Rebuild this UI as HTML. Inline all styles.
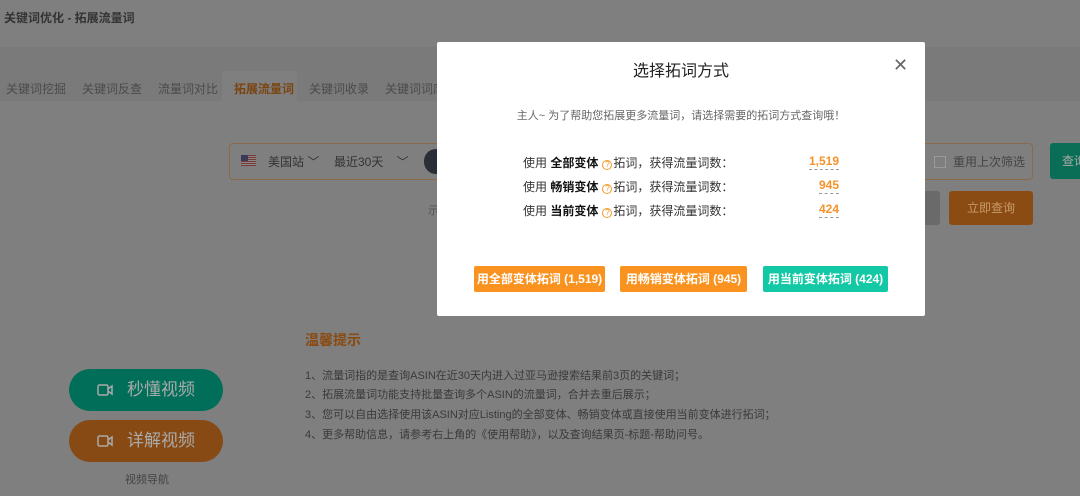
<!DOCTYPE html>
<html><head><meta charset="utf-8"><style>
*{margin:0;padding:0;box-sizing:border-box}
body{width:1080px;height:496px;overflow:hidden;background:#7f7f7f;font-family:"Liberation Sans","Noto Sans CJK SC",sans-serif;position:relative;color:#222}
.a{position:absolute;white-space:nowrap}
.tabs{position:absolute;left:0;top:47px;width:1080px;height:54px;background:#7a7a7a}
.tab{position:absolute;top:80px;font-size:12px;color:#4a4a4a}
.modal{position:absolute;left:437px;top:42px;width:488px;height:274px;background:#fff;border-radius:2px}
.row{position:absolute;left:86px;font-size:12px;color:#333}
.row b{color:#111}
.q{display:inline-block;width:10px;height:10px;border:1px solid #f39a2b;border-radius:50%;font-size:8px;line-height:8px;text-align:center;color:#f39a2b;vertical-align:0;margin:0 1px 0 4px}
.num{position:absolute;right:86px;font-size:12px;font-weight:bold;color:#f7922a;border-bottom:1px dashed #999;line-height:15px}
.btn{position:absolute;top:224px;height:26px;border-radius:2px;color:#fff;font-size:12px;line-height:26px;text-align:center;font-weight:bold}
.li{position:absolute;left:305px;font-size:11px;color:#3a3a3a}
</style></head><body>
<div class="a" style="left:4px;top:9px;font-size:12px;font-weight:bold;color:#333">关键词优化 - 拓展流量词</div>
<div class="tabs"></div>
<div class="a" style="left:222px;top:71px;width:75px;height:30px;background:#7f7f7f"></div>
<div class="tab" style="left:6px">关键词挖掘</div>
<div class="tab" style="left:82px">关键词反查</div>
<div class="tab" style="left:158px">流量词对比</div>
<div class="tab" style="left:234px;color:#7a4410;font-weight:bold">拓展流量词</div>
<div class="tab" style="left:309px">关键词收录</div>
<div class="tab" style="left:385px">关键词词库</div>
<div class="a" style="left:229px;top:143px;width:210px;height:37px;border:1px solid #8a6a48;border-right:none;border-radius:4px 0 0 4px"></div>
<div class="a" style="left:241px;top:155px;width:15px;height:11px;background:repeating-linear-gradient(#7a3a3a 0 1px,#888 1px 2px)"><div style="width:7px;height:6px;background:#3a3a5a"></div></div>
<div class="a" style="left:268px;top:153px;font-size:12px;color:#333">美国站 ﹀</div>
<div class="a" style="left:334px;top:153px;font-size:12px;color:#333">最近30天 &nbsp; &nbsp;﹀</div>
<div class="a" style="left:424px;top:149px;width:14px;height:25px;border-radius:12px 0 0 12px;background:#2a2e36"></div>
<div class="a" style="left:925px;top:143px;width:108px;height:37px;border:1px solid #8a6a48;border-left:none;border-radius:0 4px 4px 0"></div>
<div class="a" style="left:934px;top:156px;width:12px;height:12px;border:1px solid #999;background:#7f7f7f"></div>
<div class="a" style="left:953px;top:153px;font-size:12px;color:#444">重用上次筛选</div>
<div class="a" style="left:1050px;top:143px;width:40px;height:36px;background:#0a6e56;border-radius:3px;color:#aaa;font-size:12px;line-height:36px;padding-left:12px">查询</div>
<div class="a" style="left:428px;top:202px;font-size:11px;color:#555">示</div>
<div class="a" style="left:900px;top:191px;width:40px;height:34px;background:#6a6a6a;border-radius:3px"></div>
<div class="a" style="left:949px;top:191px;width:84px;height:34px;background:#8a4c12;border-radius:3px;color:#c89a6a;font-size:12px;line-height:34px;text-align:center">立即查询</div>
<div class="a" style="left:305px;top:330px;font-size:14px;font-weight:bold;color:#8a4a10">温馨提示</div>
<div class="li" style="top:367px">1、流量词指的是查询ASIN在近30天内进入过亚马逊搜索结果前3页的关键词；</div>
<div class="li" style="top:386px">2、拓展流量词功能支持批量查询多个ASIN的流量词，合并去重后展示；</div>
<div class="li" style="top:406px">3、您可以自由选择使用该ASIN对应Listing的全部变体、畅销变体或直接使用当前变体进行拓词；</div>
<div class="li" style="top:426px">4、更多帮助信息，请参考右上角的《使用帮助》，以及查询结果页-标题-帮助问号。</div>
<div class="a" style="left:69px;top:369px;width:154px;height:42px;border-radius:21px;background:#006e58;color:#aaa;font-size:17px;line-height:42px;padding-left:28px"><svg width="16" height="12" viewBox="0 0 16 12" style="vertical-align:-1px;margin-right:14px"><rect x="1" y="1" width="10" height="10" rx="1.5" fill="none" stroke="#aaa" stroke-width="1.5"/><path d="M11 5 L15 2 V10 L11 7" fill="none" stroke="#aaa" stroke-width="1.5"/></svg>秒懂视频</div>
<div class="a" style="left:69px;top:420px;width:154px;height:42px;border-radius:21px;background:#874a14;color:#aaa;font-size:17px;line-height:42px;padding-left:28px"><svg width="16" height="12" viewBox="0 0 16 12" style="vertical-align:-1px;margin-right:14px"><rect x="1" y="1" width="10" height="10" rx="1.5" fill="none" stroke="#aaa" stroke-width="1.5"/><path d="M11 5 L15 2 V10 L11 7" fill="none" stroke="#aaa" stroke-width="1.5"/></svg>详解视频</div>
<div class="a" style="left:125px;top:471px;font-size:11px;color:#444">视频导航</div>
<div class="modal">
<div class="a" style="left:0;width:488px;text-align:center;top:15px;font-size:16px;color:#222">选择拓词方式</div>
<div class="a" style="left:456px;top:13px;font-size:18px;color:#666;line-height:20px">✕</div>
<div class="a" style="left:0;width:488px;text-align:center;top:65px;font-size:11px;color:#666">主人~ 为了帮助您拓展更多流量词，请选择需要的拓词方式查询哦！</div>
<div class="row" style="top:112px">使用 <b>全部变体</b><span class="q">?</span>拓词，获得流量词数：</div><div class="num" style="top:112px">1,519</div>
<div class="row" style="top:136px">使用 <b>畅销变体</b><span class="q">?</span>拓词，获得流量词数：</div><div class="num" style="top:136px">945</div>
<div class="row" style="top:160px">使用 <b>当前变体</b><span class="q">?</span>拓词，获得流量词数：</div><div class="num" style="top:160px">424</div>
<div class="btn" style="left:37px;width:131px;background:#fa921f">用全部变体拓词 (1,519)</div>
<div class="btn" style="left:183px;width:127px;background:#fa921f">用畅销变体拓词 (945)</div>
<div class="btn" style="left:326px;width:125px;background:#13c8a5">用当前变体拓词 (424)</div>
</div>
</body></html>
